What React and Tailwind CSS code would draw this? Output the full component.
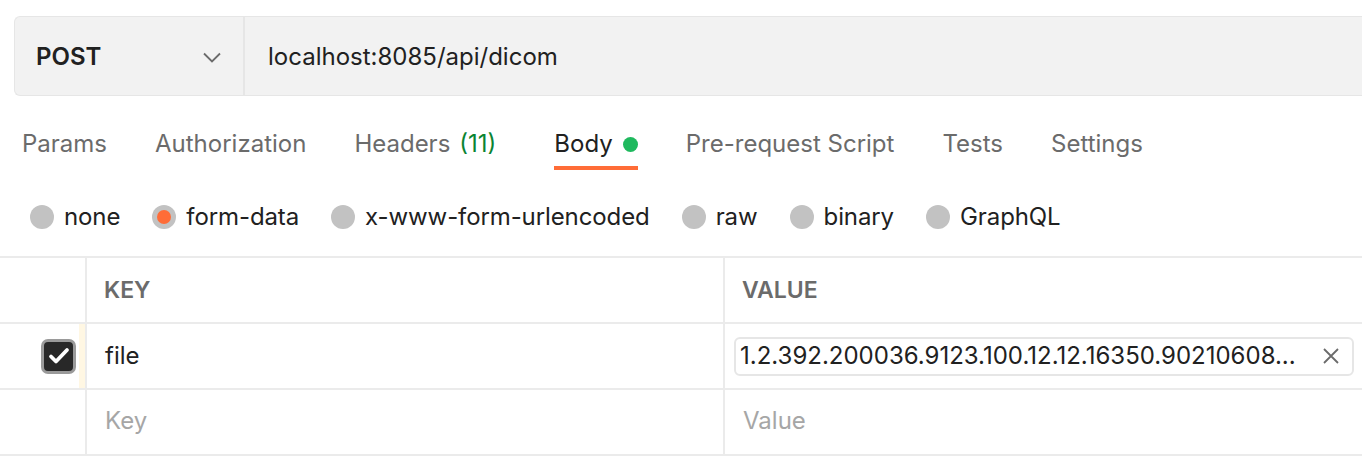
import React from 'react';

const tabs = [
  { name: 'Params' },
  { name: 'Authorization' },
  { name: 'Headers', count: '(11)' },
  { name: 'Body', active: true, dot: true },
  { name: 'Pre-request Script' },
  { name: 'Tests' },
  { name: 'Settings' },
];

const modos = ['none', 'form-data', 'x-www-form-urlencoded', 'raw', 'binary', 'GraphQL'];

const App = () => {
  return (
    <div className="w-[1362px] h-[468px] bg-white overflow-hidden text-[#212121]" style={{ fontFamily: 'Inter, "Noto Sans", sans-serif' }}>
      <div className="pl-[14px] pt-[16px]">
        <div className="flex h-[80px] bg-[#f2f2f2] border border-r-0 border-[#e6e6e6] rounded-l-[6px]">
          <div className="w-[230px] flex items-center justify-between pl-[21px] pr-[22px] pt-[2px] border-r-2 border-[#e6e6e6]">
            <span className="text-[24px] font-semibold">POST</span>
            <svg width="18" height="11" viewBox="0 0 18 11" fill="none" stroke="#6b6b6b" strokeWidth="1.8">
              <path d="M1 1.5l8 8 8-8" />
            </svg>
          </div>
          <div className="flex items-center pl-[23px] pt-[2px] text-[24px]">localhost:8085/api/dicom</div>
        </div>
      </div>

      <div className="flex pl-[22px] h-[97px] pt-[26px]">
        {tabs.map((t, i) => (
          <div key={t.name} className={`flex flex-col ${i === 0 ? '' : t.active ? 'ml-[58px]' : 'ml-[48px]'}`}>
            <div className={`flex items-center h-[44px] text-[24px] ${t.active ? 'text-[#212121]' : 'text-[#6b6b6b]'}`}>
              <span>{t.name}</span>
              {t.count && <span className="ml-[9px] text-[#0a8433]">{t.count}</span>}
              {t.dot && <span className="ml-[10px] w-[15px] h-[15px] rounded-full bg-[#1fb95e]"></span>}
            </div>
            <div className={`h-[4px] ${t.active ? 'bg-[#ff6c37]' : ''}`}></div>
          </div>
        ))}
      </div>

      <div className="flex items-center gap-[32px] pl-[30px] h-[54px] pt-[2px] pb-[8px]">
        {modos.map(m => (
          <div key={m} className="flex items-center gap-[10px]">
            <span className="w-[24px] h-[24px] rounded-full bg-[#c2c2c2] flex items-center justify-center">
              {m === 'form-data' && <span className="w-[14px] h-[14px] rounded-full bg-[#ff6c37]"></span>}
            </span>
            <span className="text-[24px] tracking-[-0.1px]">{m}</span>
          </div>
        ))}
      </div>

      <div className="mt-[9px] border-t-2 border-[#ebebeb]">
        <div className="flex h-[66px] border-b-2 border-[#ebebeb]">
          <div className="w-[87px] border-r-2 border-[#ebebeb]"></div>
          <div className="w-[638px] border-r-2 border-[#ebebeb] flex items-center pl-[17px] text-[23px] font-semibold text-[#6b6b6b]">KEY</div>
          <div className="flex-1 flex items-center pl-[17px] text-[23px] font-semibold text-[#6b6b6b]">VALUE</div>
        </div>
        <div className="flex h-[66px] border-b-2 border-[#ebebeb]">
          <div className="w-[87px] border-r-2 border-[#ebebeb] flex">
            <div className="flex-1 flex items-center justify-end pr-[3px]">
              <div className="w-[35px] h-[35px] rounded-[7px] bg-[#282828] border-[3px] border-[#9a9a9a] flex items-center justify-center">
                <svg width="22" height="18" viewBox="0 0 22 18" fill="none" stroke="white" strokeWidth="3.8" strokeLinecap="round" strokeLinejoin="round">
                  <path d="M3 9.5l5 5L19 3" />
                </svg>
              </div>
            </div>
            <div className="w-[6px] bg-[#fff7e3]"></div>
          </div>
          <div className="w-[638px] border-r-2 border-[#ebebeb] flex items-center pl-[18px] text-[24px]">file</div>
          <div className="flex-1 flex items-center pl-[9px] pr-[8px]">
            <div className="flex-1 h-[39px] border-2 border-[#e6e6e6] rounded-[6px] flex items-center justify-between pl-[4px] pr-[12px]">
              <span className="text-[24px] whitespace-nowrap">1.2.392.200036.9123.100.12.12.16350.90210608...</span>
              <svg width="18" height="18" viewBox="0 0 18 18" fill="none" stroke="#6b6b6b" strokeWidth="1.8">
                <path d="M2 2l14 14M16 2L2 16" />
              </svg>
            </div>
          </div>
        </div>
        <div className="flex h-[66px] border-b-2 border-[#ebebeb]">
          <div className="w-[87px] border-r-2 border-[#ebebeb]"></div>
          <div className="w-[638px] border-r-2 border-[#ebebeb] flex items-center pl-[18px] pb-[2px] text-[24px] text-[#a6a6a6]">Key</div>
          <div className="flex-1 flex items-center pl-[18px] pb-[2px] text-[24px] text-[#a6a6a6]">Value</div>
        </div>
      </div>
    </div>
  );
};

export default App;
